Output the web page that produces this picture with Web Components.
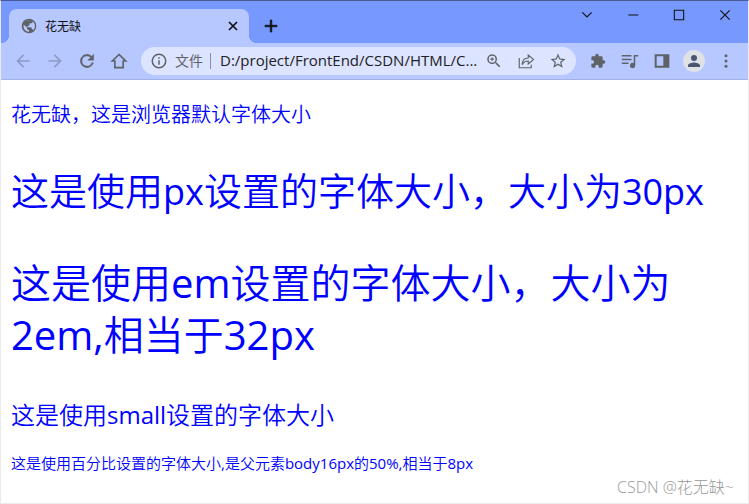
<!DOCTYPE html>
<html lang="zh-CN">
<head>
<meta charset="utf-8">
<title>花无缺</title>
<style>
   html, body { margin: 0; height: 100% }
   body { font-family: "Open Sans", "Noto Sans CJK SC", sans-serif; background: #fff }
</style>
</head>
<body>

<browser-window>
   <tab-strip slot="top"><browser-tab>花无缺</browser-tab></tab-strip>
   <tool-bar slot="top"></tool-bar>
   <font-line>花无缺，这是浏览器默认字体大小</font-line>
   <font-line size="px">这是使用<span>px</span>设置的字体大小，大小为<span>30px</span></font-line>
   <font-line size="em">这是使用<span>em</span>设置的字体大小，大小为<span>2em,</span>相当于<span>32px</span></font-line>
   <font-line size="small">这是使用<span>small</span>设置的字体大小</font-line>
   <font-line size="percent">这是使用百分比设置的字体大小<span>,</span>是父元素<span>body16px</span>的<span>50%,</span>相当于<span>8px</span></font-line>
   <water-mark slot="mark">CSDN @花无缺~</water-mark>
</browser-window>

<script>
const define = ( name, html, setup ) => {
   const template = document.createElement( 'template' );
   template.innerHTML = html;
   customElements.define( name, class extends HTMLElement {
      constructor() { super();
         this.attachShadow( { mode: 'open' } )
            .appendChild( template.content.cloneNode( true ) );
         if ( setup ) setup.call( this ) }
   })
}

// filled icons on a 24 unit grid
const icons = {
   globe:    '<path fill-rule="evenodd" d="M12 1a11 11 0 1 0 0 22 11 11 0 0 0 0-22zM4 10l5 4v3l3 1v2.500C6 20 3 15 4 10zm6-6c4-1 7 0 8 2l-2 2h-3v3l-3 1v2h5l2 3 2 1c4-6 1-12-3-14-3-1-6-1-8 0z"/>',
   close:    '<path d="m6 6 12 12M18 6 6 18" fill="none" stroke="currentColor" stroke-width="2.600"/>',
   plus:     '<path d="M11 4h2v7h7v2h-7v7h-2v-7H4v-2h7z" stroke="currentColor"/>',
   back:     '<path d="M20 11H7.830l5.590-5.590L12 4l-8 8 8 8 1.410-1.410L7.830 13H20v-2z"/>',
   forward:  '<path d="m12 4-1.410 1.410L16.170 11H4v2h12.170l-5.580 5.590L12 20l8-8z"/>',
   reload:   '<path d="M17.650 6.350A8 8 0 1 0 19.730 14h-2.080A6 6 0 1 1 12 6c1.660 0 3.140.690 4.220 1.780L13 11h7V4z" stroke="currentColor" stroke-width=".5"/>',
   home:     '<path d="M12 4.200 4 12h3v8h10v-8h3z" fill="none" stroke="currentColor" stroke-width="2"/>',
   info:     '<path d="M11 7h2v2h-2zm0 4h2v6h-2zm1-9a10 10 0 1 0 0 20 10 10 0 0 0 0-20zm0 18a8 8 0 1 1 0-16 8 8 0 0 1 0 16z"/>',
   zoom:     '<path d="M15.500 14h-.790l-.280-.270A6.500 6.500 0 1 0 13.730 14.430l.270.280v.790l5 4.990L20.490 19zm-6 0a4.500 4.500 0 1 1 0-9 4.500 4.500 0 0 1 0 9zM8.800 7h1.400v1.800H12v1.400h-1.800V12H8.800v-1.800H7V8.800h1.800z"/>',
   share:    '<path d="M3 8v13h16v-4M7 17c0-6 3-9 8-9V4l7 6-7 6v-4c-4 0-6 1-8 5z" fill="none" stroke="currentColor" stroke-width="1.500"/>',
   star:     '<path d="m22 9.240-7.190-.620L12 2 9.190 8.630 2 9.240l5.460 4.730L5.820 21 12 17.270 18.180 21l-1.630-7.030zM12 15.400l-3.760 2.270 1-4.280-3.320-2.880 4.380-.380L12 6.100l1.710 4.040 4.380.380-3.320 2.880 1 4.280z"/>',
   puzzle:   '<path d="M20.500 11H19V7a2 2 0 0 0-2-2h-4V3.500a2.500 2.500 0 0 0-5 0V5H4a2 2 0 0 0-2 2v3.800h1.500a2.700 2.700 0 0 1 0 5.400H2V20a2 2 0 0 0 2 2h3.800v-1.500a2.700 2.700 0 0 1 5.400 0V22H17a2 2 0 0 0 2-2v-4h1.500a2.500 2.500 0 0 0 0-5z"/>',
   media:    '<path d="M1 4h13v2H1zm0 5h13v2H1zm0 5h9v2H1zm16-10h6v2h-4v12a3.500 3.500 0 1 1-2-3.200z"/>',
   panel:    '<path fill-rule="evenodd" d="M1 2h22v20H1zm3 3v14h10V5z"/>',
   person:   '<path d="M12 12a4 4 0 1 0 0-8 4 4 0 0 0 0 8zm0 2c-2.670 0-8 1.340-8 4v2h16v-2c0-2.660-5.330-4-8-4z"/>',
   more:     '<circle cx="12" cy="5" r="2"/><circle cx="12" cy="12" r="2"/><circle cx="12" cy="19" r="2"/>',
   chevron:  '<path d="m5 8 7 7 7-7" fill="none" stroke="currentColor" stroke-width="1.700"/>',
   minimize: '<path d="M5 12h15" fill="none" stroke="currentColor" stroke-width="1.500"/>',
   maximize: '<path d="M5 5h14v14H5z" fill="none" stroke="currentColor" stroke-width="1.600"/>',
   exit:     '<path d="m5 5 14 14M19 5 5 19" fill="none" stroke="currentColor" stroke-width="1.700"/>'
}

define( 'ui-icon', `
   <style>
      :host { display: block; width: 18px; height: 18px; flex: none }
      :host([small]) { width: 16px; height: 16px }
      :host([large]) { width: 20px; height: 20px }
      svg { display: block; width: 100%; height: 100%; fill: currentColor }
   </style>
   <svg viewBox="0 0 24 24" aria-hidden="true"></svg>`,
   function() { this.shadowRoot.querySelector( 'svg' ).innerHTML = icons[ this.getAttribute( 'name' ) ] || '' }
)

define( 'browser-window', `
   <style>
      :host { display: flex; flex-direction: column; box-sizing: border-box; min-height: 100%; position: relative;
         border: 1px solid #ebebeb; border-top-color: #4b5a94; background: #fff }
      main { flex: 1; padding: 1px 10px 0 }
   </style>
   <slot name="top"></slot>
   <main><slot></slot></main>
   <slot name="mark"></slot>`
)

define( 'tab-strip', `
   <style>
      :host { display: flex; height: 42px; padding-left: 8px; background: #7798ff; color: #111 }
      button { display: grid; place-items: center; border: 0; padding: 0; background: none; color: inherit }
      .add { width: 28px; align-self: center; margin: 8px auto 0 8px }
      .controls { display: flex; height: 28px }
      .controls button { width: 46px }
   </style>
   <slot></slot>
   <button class="add" aria-label="新标签页"><ui-icon name="plus"></ui-icon></button>
   <div class="controls">
      <button aria-label="搜索标签页"><ui-icon small name="chevron"></ui-icon></button>
      <button aria-label="最小化"><ui-icon small name="minimize"></ui-icon></button>
      <button aria-label="最大化"><ui-icon small name="maximize"></ui-icon></button>
      <button aria-label="关闭"><ui-icon small name="exit"></ui-icon></button>
   </div>`
)

define( 'browser-tab', `
   <style>
      :host { display: flex; align-items: center; gap: 8px; box-sizing: border-box; flex: 0 1 240px; position: relative;
         margin-top: 8px; padding: 0 8px 0 12px; border-radius: 8px 8px 0 0; background: #b7c7ff; font-size: 12px }
      /* the concave feet of the tab */
      :host::before, :host::after { content: ''; position: absolute; bottom: 0; width: 8px; height: 8px }
      :host::before { right: 100%; background: radial-gradient( circle at 0 0, transparent 8px, #b7c7ff 8px ) }
      :host::after { left: 100%; background: radial-gradient( circle at 100% 0, transparent 8px, #b7c7ff 8px ) }
      span { flex: 1 }
      button { border: 0; padding: 0; background: none; color: #111 }
      .globe { color: #5f6368 }
   </style>
   <ui-icon small class="globe" name="globe"></ui-icon>
   <span><slot></slot></span>
   <button aria-label="关闭标签页"><ui-icon small name="close"></ui-icon></button>`
)

define( 'tool-bar', `
   <style>
      :host { display: flex; align-items: center; height: 36px; padding: 0 6px; border-bottom: 1px solid #a3b2e4;
         background: #b7c7ff; color: #5f6368 }
      button { display: grid; place-items: center; width: 32px; height: 28px; border: 0; padding: 0; background: none; color: inherit }
      button:disabled { color: #8e9bc4 }
      .address { display: flex; align-items: center; flex: 1; min-width: 0; height: 28px; margin: 0 6px;
         padding: 0 2px 0 9px; border-radius: 14px; background: #dce4ff; font-size: 14px }
      label { margin-left: 7px; padding-right: 7px; border-right: 1px solid #888fa8; line-height: 16px; white-space: nowrap }
      input { flex: 1; min-width: 0; height: 20px; margin: 0 0 2px; border: 0; padding: 0 0 0 9px; background: none; outline: 0;
         font: inherit; font-size: 15px; color: #202124; text-overflow: ellipsis }
      .avatar { width: 22px; height: 22px; margin: 0 5px; border-radius: 50%; background: #dee1e6; color: #4a5670 }
   </style>
   <button disabled aria-label="后退"><ui-icon large name="back"></ui-icon></button>
   <button disabled aria-label="前进"><ui-icon large name="forward"></ui-icon></button>
   <button aria-label="重新加载"><ui-icon large name="reload"></ui-icon></button>
   <button aria-label="主页"><ui-icon large name="home"></ui-icon></button>
   <div class="address">
      <ui-icon name="info"></ui-icon>
      <label for="url">文件</label>
      <input id="url" value="D:/project/FrontEnd/CSDN/HTML/C...">
      <button aria-label="缩放"><ui-icon name="zoom"></ui-icon></button>
      <button aria-label="分享"><ui-icon name="share"></ui-icon></button>
      <button aria-label="收藏"><ui-icon name="star"></ui-icon></button>
   </div>
   <button aria-label="扩展程序"><ui-icon small name="puzzle"></ui-icon></button>
   <button aria-label="媒体"><ui-icon name="media"></ui-icon></button>
   <button aria-label="侧边栏"><ui-icon small name="panel"></ui-icon></button>
   <button class="avatar" aria-label="个人资料"><ui-icon name="person"></ui-icon></button>
   <button aria-label="更多"><ui-icon name="more"></ui-icon></button>`
)

define( 'font-line', `
   <style>
      :host { display: block; margin: 20px 0; font-size: 20px; line-height: 28px; font-weight: 350; color: #00f }
      :host([size=px]) { margin: 36px 0; font-size: 38px; line-height: 50px }
      :host([size=em]) { margin: 40px 0; font-size: 40px; line-height: 52px }
      :host([size=small]) { margin: 24px 0; font-size: 24px; line-height: 28px }
      :host([size=percent]) { margin: 15px 0; font-size: 15px; line-height: 20px }
      /* latin runs keep the regular weight next to the thinner chinese */
      ::slotted(span) { font-weight: 400 }
      :host([size=px]) ::slotted(span) { font-size: 36px }
      p { margin: 0 }
   </style>
   <p><slot></slot></p>`
)

define( 'water-mark', `
   <style>
      :host { position: absolute; right: 14px; bottom: 6px; font-size: 16px; line-height: 20px; font-weight: 300; color: #999 }
   </style>
   <slot></slot>`
)
</script>
</body>
</html>
